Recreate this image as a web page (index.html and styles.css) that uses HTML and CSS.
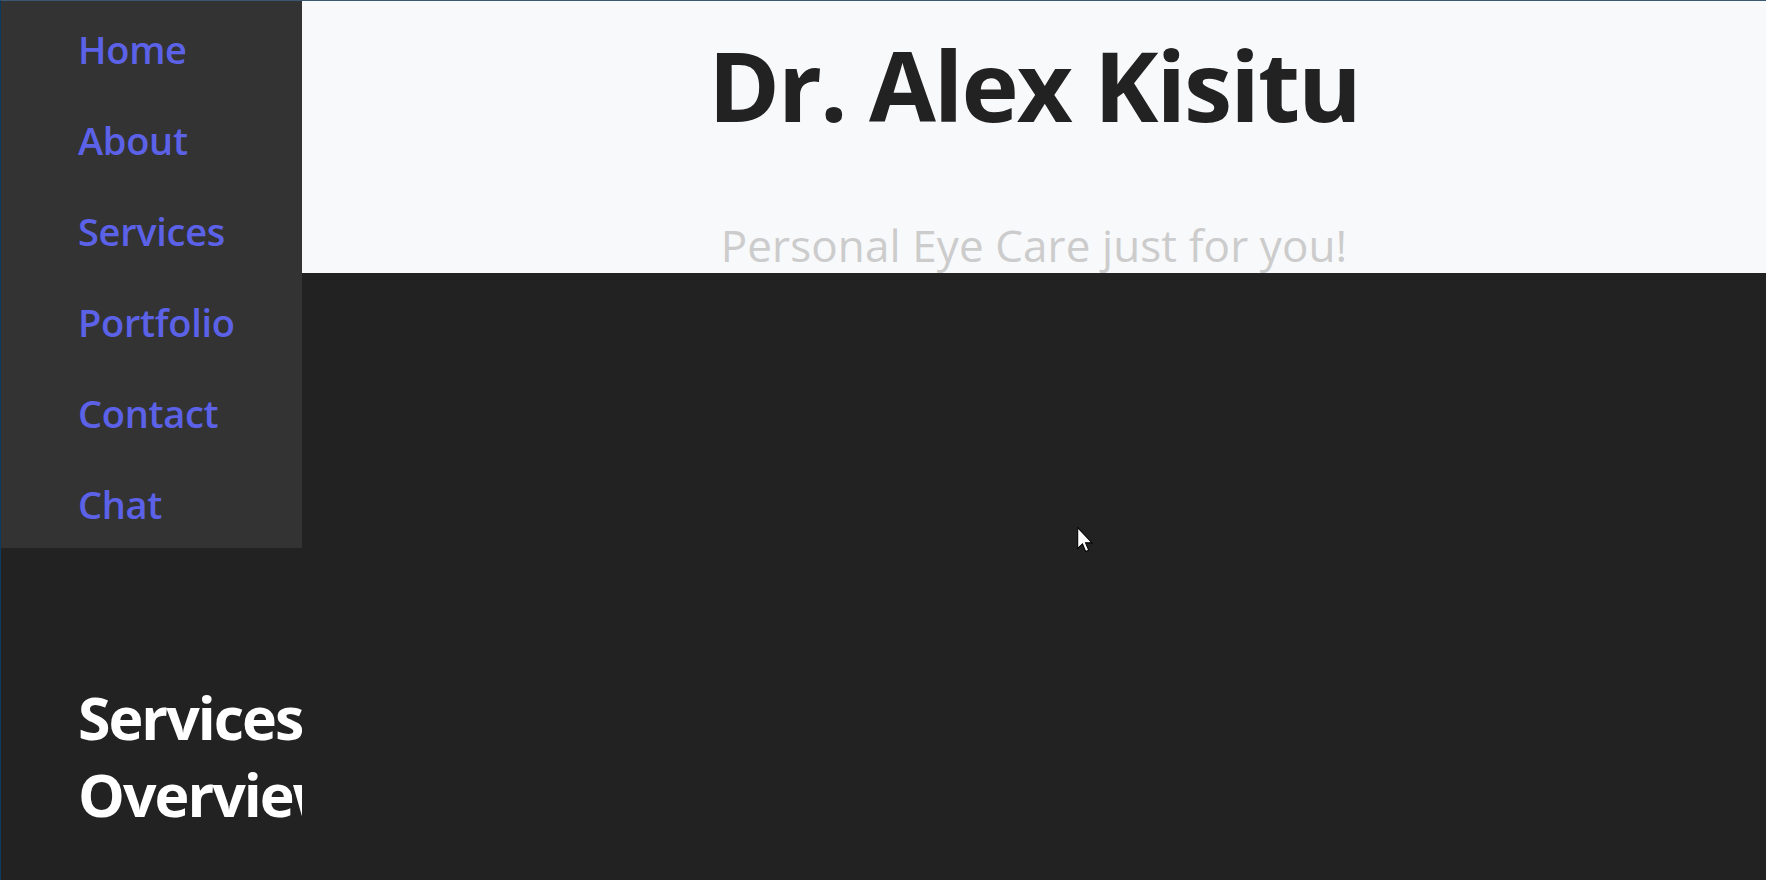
FILE: index.html
```html
<!DOCTYPE html>
<html lang="en">
<head>
<meta charset="utf-8">
<title>Dr. Alex Kisitu</title>
<link rel="stylesheet" href="styles.css">
</head>
<body>
<div class="page">
  <aside class="side">
    <nav class="nav">
      <a href="#home">Home</a>
      <a href="#about">About</a>
      <a href="#services">Services</a>
      <a href="#portfolio">Portfolio</a>
      <a href="#contact">Contact</a>
      <a href="#chat">Chat</a>
    </nav>
    <h2 class="section-title">Services Overview</h2>
  </aside>
  <main class="main">
    <header class="hero">
      <h1 class="hero-title">Dr. Alex Kisitu</h1>
      <p class="hero-sub">Personal Eye Care just for you!</p>
    </header>
  </main>
</div>
<svg class="cursor" width="17" height="26" viewBox="0 0 13 20" aria-hidden="true">
  <path d="M0.5 0.5 L0.5 16.5 L4.2 13 L6.6 18.8 L8.9 17.8 L6.5 12.2 L11.5 12.2 Z" fill="#fff" stroke="#000" stroke-width="0.8" stroke-linejoin="miter"/>
</svg>
</body>
</html>
```
FILE: styles.css
```css
html, body {
  margin: 0;
  padding: 0;
}
body {
  width: 1766px;
  height: 880px;
  overflow: hidden;
  background: #222222;
  box-sizing: border-box;
  border-top: 1px solid #3b5872;
  border-left: 1px solid #0b3a5c;
  font-family: "Open Sans", "Noto Sans", sans-serif;
  position: relative;
}
.page {
  display: grid;
  grid-template-columns: 301px 1fr;
  height: 100%;
}
.side {
  overflow: hidden;
  display: flex;
  flex-direction: column;
}
.nav {
  background: #333333;
  height: 547px;
  display: flex;
  flex-direction: column;
  padding: 3px 0 0 77px;
  box-sizing: border-box;
}
.nav a {
  color: #5c62e8;
  text-decoration: none;
  font-size: 38px;
  font-weight: 600;
  line-height: 91px;
  letter-spacing: -0.3px;
  white-space: nowrap;
}
.section-title {
  margin: 131px 0 0 77px;
  color: #ffffff;
  font-size: 59px;
  font-weight: 700;
  line-height: 77px;
  letter-spacing: -2px;
  width: 300px;
}
.main {
  display: flex;
  flex-direction: column;
}
.hero {
  background: #f8f9fb;
  height: 272px;
  overflow: hidden;
  display: flex;
  flex-direction: column;
  align-items: center;
  box-sizing: border-box;
}
.hero-title {
  margin: 25px 0 0 0;
  font-size: 97px;
  font-weight: 700;
  line-height: 1.2;
  letter-spacing: -2px;
  color: #222222;
  white-space: nowrap;
}
.hero-sub {
  margin: 77px 0 0 0;
  font-size: 44px;
  font-weight: 400;
  line-height: 1.2;
  letter-spacing: 0.1px;
  color: #cccccc;
  white-space: nowrap;
}
.cursor {
  position: absolute;
  left: 1076px;
  top: 526px;
}
```
